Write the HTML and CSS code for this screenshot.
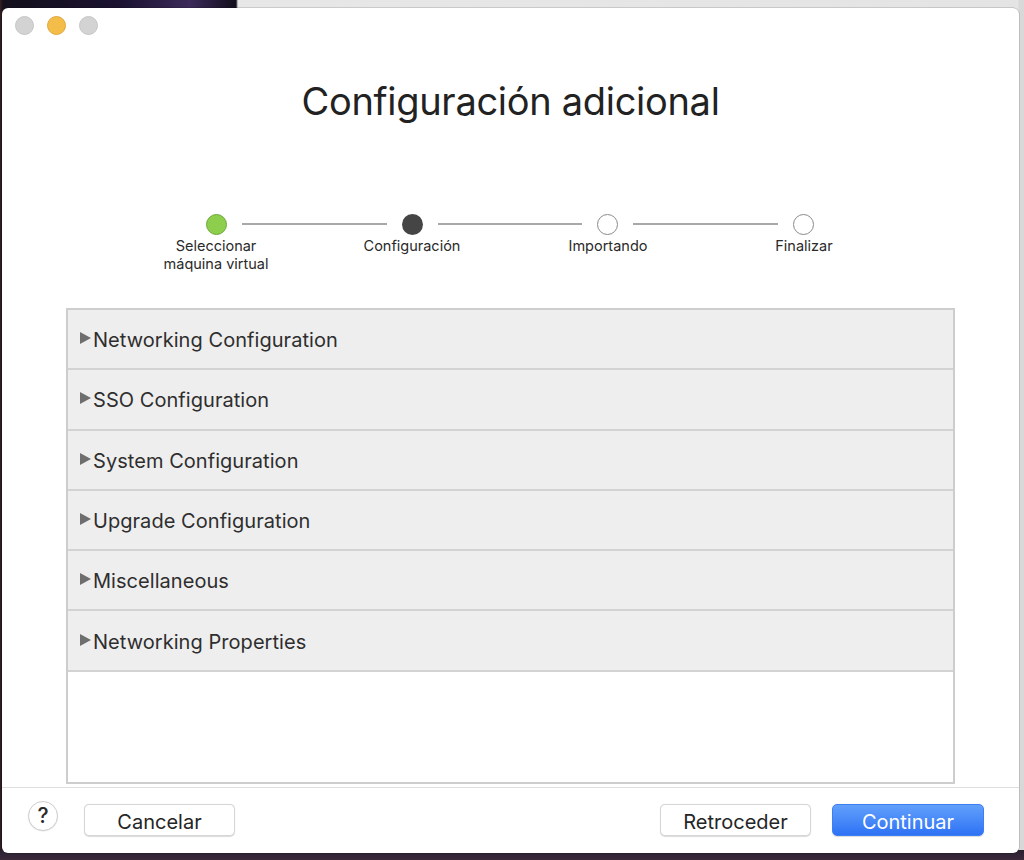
FILE: index.html
```html
<!DOCTYPE html>
<html lang="es">
<head>
<meta charset="utf-8">
<title>Configuración adicional</title>
<link rel="stylesheet" href="styles.css">
</head>
<body>
<div class="desktop">
  <div class="window">
    <div class="titlebar">
      <span class="light light-grey"></span>
      <span class="light light-yellow"></span>
      <span class="light light-grey"></span>
    </div>
    <h1 class="title">Configuración adicional</h1>
    <div class="stepper">
      <div class="track">
        <span class="dot dot-done"></span>
        <span class="seg"></span>
        <span class="dot dot-current"></span>
        <span class="seg"></span>
        <span class="dot dot-todo"></span>
        <span class="seg"></span>
        <span class="dot dot-todo"></span>
      </div>
      <div class="labels">
        <span class="label">Seleccionar<br>máquina virtual</span>
        <span class="label">Configuración</span>
        <span class="label">Importando</span>
        <span class="label">Finalizar</span>
      </div>
    </div>
    <div class="panel">
      <div class="row"><span class="tri"></span><span class="row-text">Networking Configuration</span></div>
      <div class="row"><span class="tri"></span><span class="row-text">SSO Configuration</span></div>
      <div class="row"><span class="tri"></span><span class="row-text">System Configuration</span></div>
      <div class="row"><span class="tri"></span><span class="row-text">Upgrade Configuration</span></div>
      <div class="row"><span class="tri"></span><span class="row-text">Miscellaneous</span></div>
      <div class="row"><span class="tri"></span><span class="row-text">Networking Properties</span></div>
    </div>
    <div class="footer">
      <button class="help">?</button>
      <button class="btn btn-cancel">Cancelar</button>
      <span class="spacer"></span>
      <button class="btn">Retroceder</button>
      <button class="btn btn-primary">Continuar</button>
    </div>
  </div>
</div>
</body>
</html>
```
FILE: styles.css
```css
* { box-sizing: border-box; }
html, body { margin: 0; padding: 0; }
body {
  width: 1024px;
  height: 860px;
  overflow: hidden;
  font-family: Inter, "Liberation Sans", sans-serif;
}
.desktop {
  width: 1024px;
  height: 860px;
  padding: 8px 5px 7px 2px;
  background:
    linear-gradient(to bottom, transparent 850px, #2b2030 850px, #3a2a3a 860px),
    linear-gradient(to right, #3a1e22 0, #14101c 3px, #1a1230 120px, #3b2a5a 190px, #120e1c 236px, #e7e7e7 238px, #e4e4e4 1018px, #d8d8d8 1019px);
}
.window {
  width: 1017px;
  height: 845px;
  background: #ffffff;
  border-radius: 6px;
  display: flex;
  flex-direction: column;
  box-shadow: 0 0 0 0.5px rgba(0,0,0,0.25);
}
.titlebar {
  height: 34px;
  display: flex;
  align-items: center;
  gap: 13px;
  padding-left: 13px;
}
.light {
  width: 19px;
  height: 19px;
  border-radius: 50%;
}
.light-grey { background: #d3d3d3; border: 1px solid #c6c6c6; }
.light-yellow { background: #f4bd4a; border: 1px solid #e0a73a; }
.title {
  margin: 35px 0 0;
  height: 48px;
  line-height: 48px;
  font-size: 38px;
  font-weight: 400;
  text-align: center;
  color: #222222;
  letter-spacing: -0.3px;
}
.stepper {
  margin-top: 89px;
  height: 94px;
}
.track {
  margin-left: 204px;
  width: 608px;
  height: 20px;
  display: flex;
  align-items: center;
}
.dot {
  width: 21px;
  height: 21px;
  border-radius: 50%;
  flex: none;
}
.dot-done { background: #8dcf4c; border: 1px solid #6ea63a; }
.dot-current { background: #454545; }
.dot-todo { background: #ffffff; border: 1px solid #8a8a8a; }
.seg {
  flex: 1;
  height: 1.5px;
  background: #a8a8a8;
  margin: 0 15px;
}
.labels {
  margin-top: 3px;
  margin-left: 116px;
  display: grid;
  grid-template-columns: repeat(4, 196px);
}
.label {
  text-align: center;
  font-size: 14.5px;
  line-height: 18px;
  color: #2a2a2a;
}
.panel {
  margin-left: 64px;
  width: 889px;
  height: 476px;
  border: 2px solid #cdcdcd;
  background: #ffffff;
}
.row {
  height: 60.3px;
  background: #eeeeee;
  border-bottom: 2px solid #d3d3d3;
  display: flex;
  align-items: center;
  padding-left: 12px;
  padding-top: 2px;
}
.tri {
  width: 0;
  height: 0;
  border-top: 6px solid transparent;
  border-bottom: 6px solid transparent;
  border-left: 11px solid #6e6e6e;
  margin-right: 2px;
  margin-top: -4px;
}
.row-text {
  font-size: 20px;
  color: #2e2e2e;
  letter-spacing: 0.05px;
}
.footer {
  margin-top: 3px;
  border-top: 1px solid #dedede;
  display: flex;
  align-items: center;
  padding: 16px 35px 0 26px;
}
.help {
  width: 30px;
  height: 30px;
  border-radius: 50%;
  border: 1px solid #cfcfcf;
  background: #ffffff;
  font-family: Inter, "Liberation Sans", sans-serif;
  font-size: 21px;
  font-weight: 500;
  color: #2a2a2a;
  padding: 0;
  line-height: 26px;
  margin-top: -9px;
  box-shadow: 0 0.5px 1px rgba(0,0,0,0.12);
}
.btn {
  width: 151px;
  height: 32px;
  border: 1px solid #d6d6d6;
  border-radius: 5px;
  background: #ffffff;
  font-family: Inter, "Liberation Sans", sans-serif;
  font-size: 20px;
  color: #252525;
  padding: 3px 0 0;
  box-shadow: 0 0.5px 1px rgba(0,0,0,0.15);
}
.btn-cancel { margin-left: 26px; }
.spacer { flex: 1; }
.btn-primary {
  width: 152px;
  margin-left: 21px;
  border: 1px solid #3b7ff2;
  background: linear-gradient(to bottom, #62a0fb, #2e72f5);
  color: #ffffff;
}
```
